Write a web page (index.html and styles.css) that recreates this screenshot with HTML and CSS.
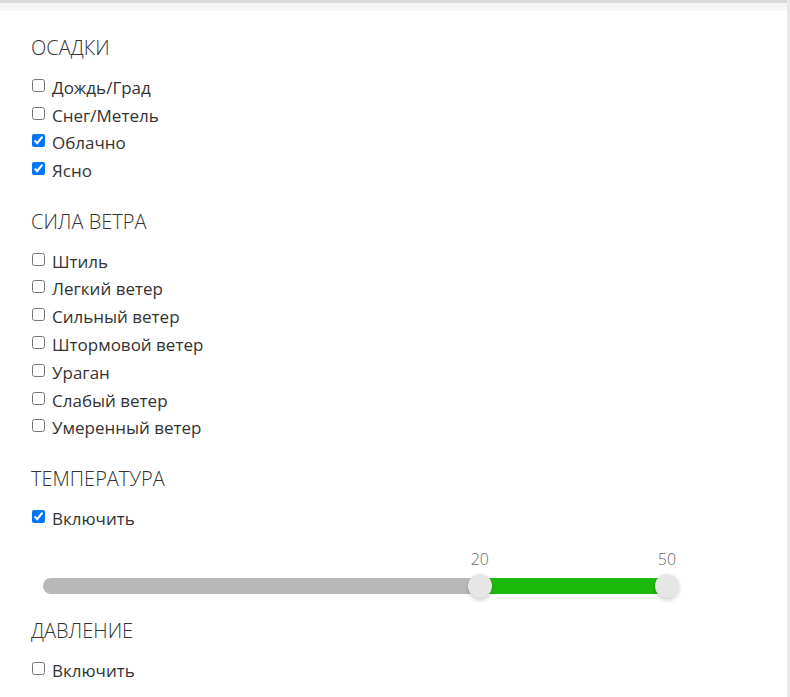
FILE: index.html
```html
<!DOCTYPE html>
<html lang="ru">
<head>
<meta charset="utf-8">
<link rel="stylesheet" href="styles.css">
</head>
<body>
<div class="frame">
  <div class="topbar"></div>
  <div class="panel">
    <section class="group">
      <h3 class="title">ОСАДКИ</h3>
      <label class="row"><input type="checkbox"> Дождь/Град</label>
      <label class="row"><input type="checkbox"> Снег/Метель</label>
      <label class="row"><input type="checkbox" checked> Облачно</label>
      <label class="row"><input type="checkbox" checked> Ясно</label>
    </section>
    <section class="group">
      <h3 class="title">СИЛА ВЕТРА</h3>
      <label class="row"><input type="checkbox"> Штиль</label>
      <label class="row"><input type="checkbox"> Легкий ветер</label>
      <label class="row"><input type="checkbox"> Сильный ветер</label>
      <label class="row"><input type="checkbox"> Штормовой ветер</label>
      <label class="row"><input type="checkbox"> Ураган</label>
      <label class="row"><input type="checkbox"> Слабый ветер</label>
      <label class="row"><input type="checkbox"> Умеренный ветер</label>
    </section>
    <section class="group">
      <h3 class="title">ТЕМПЕРАТУРА</h3>
      <label class="row"><input type="checkbox" checked> Включить</label>
      <div class="slider">
        <div class="track">
          <div class="fill" style="left:70%;width:30%"></div>
          <div class="handle" style="left:70%"><span class="val">20</span></div>
          <div class="handle" style="left:100%"><span class="val">50</span></div>
        </div>
      </div>
    </section>
    <section class="group">
      <h3 class="title">ДАВЛЕНИЕ</h3>
      <label class="row"><input type="checkbox"> Включить</label>
    </section>
  </div>
</div>
</body>
</html>
```
FILE: styles.css
```css
html, body {
  margin: 0;
  padding: 0;
  background: #fafafa;
}
body {
  font-family: "Open Sans", "Liberation Sans", sans-serif;
  color: #333;
}
.frame {
  width: 787px;
  height: 697px;
  border-right: 3px solid #e9e9e9;
  overflow: hidden;
  background: #fff;
}
.topbar {
  height: 8px;
  border-top: 3px solid #d9d9d9;
  background: #f5f5f5;
}
.panel {
  padding: 22px 0 0 28px;
}
.group {
  margin-bottom: 22px;
}
.title {
  margin: 0 0 10.5px 3px;
  font-size: 20px;
  font-weight: 300;
  line-height: 30px;
  color: #333;
}
.row {
  display: flex;
  align-items: center;
  height: 27.8px;
  font-size: 17px;
  color: #333;
}
.row input {
  margin: 0 7px 4px 4px;
  width: 13px;
  height: 13px;
}
.slider {
  padding: 46px 22px 0 15px;
}
.track {
  position: relative;
  height: 16px;
  border-radius: 8px;
  background: #b8b8b8;
  width: 624px;
}
.fill {
  position: absolute;
  top: 0;
  bottom: 0;
  background: #1cba0a;
}
.handle {
  position: absolute;
  top: 50%;
  width: 24px;
  height: 24px;
  margin: -12px 0 0 -12px;
  border-radius: 50%;
  background: #e6e6e6;
  box-shadow: 0 2px 4px rgba(0,0,0,0.2);
}
.val {
  position: absolute;
  bottom: 28px;
  left: 50%;
  transform: translateX(-50%);
  font-size: 16px;
  color: #666;
  font-weight: 300;
}
```
